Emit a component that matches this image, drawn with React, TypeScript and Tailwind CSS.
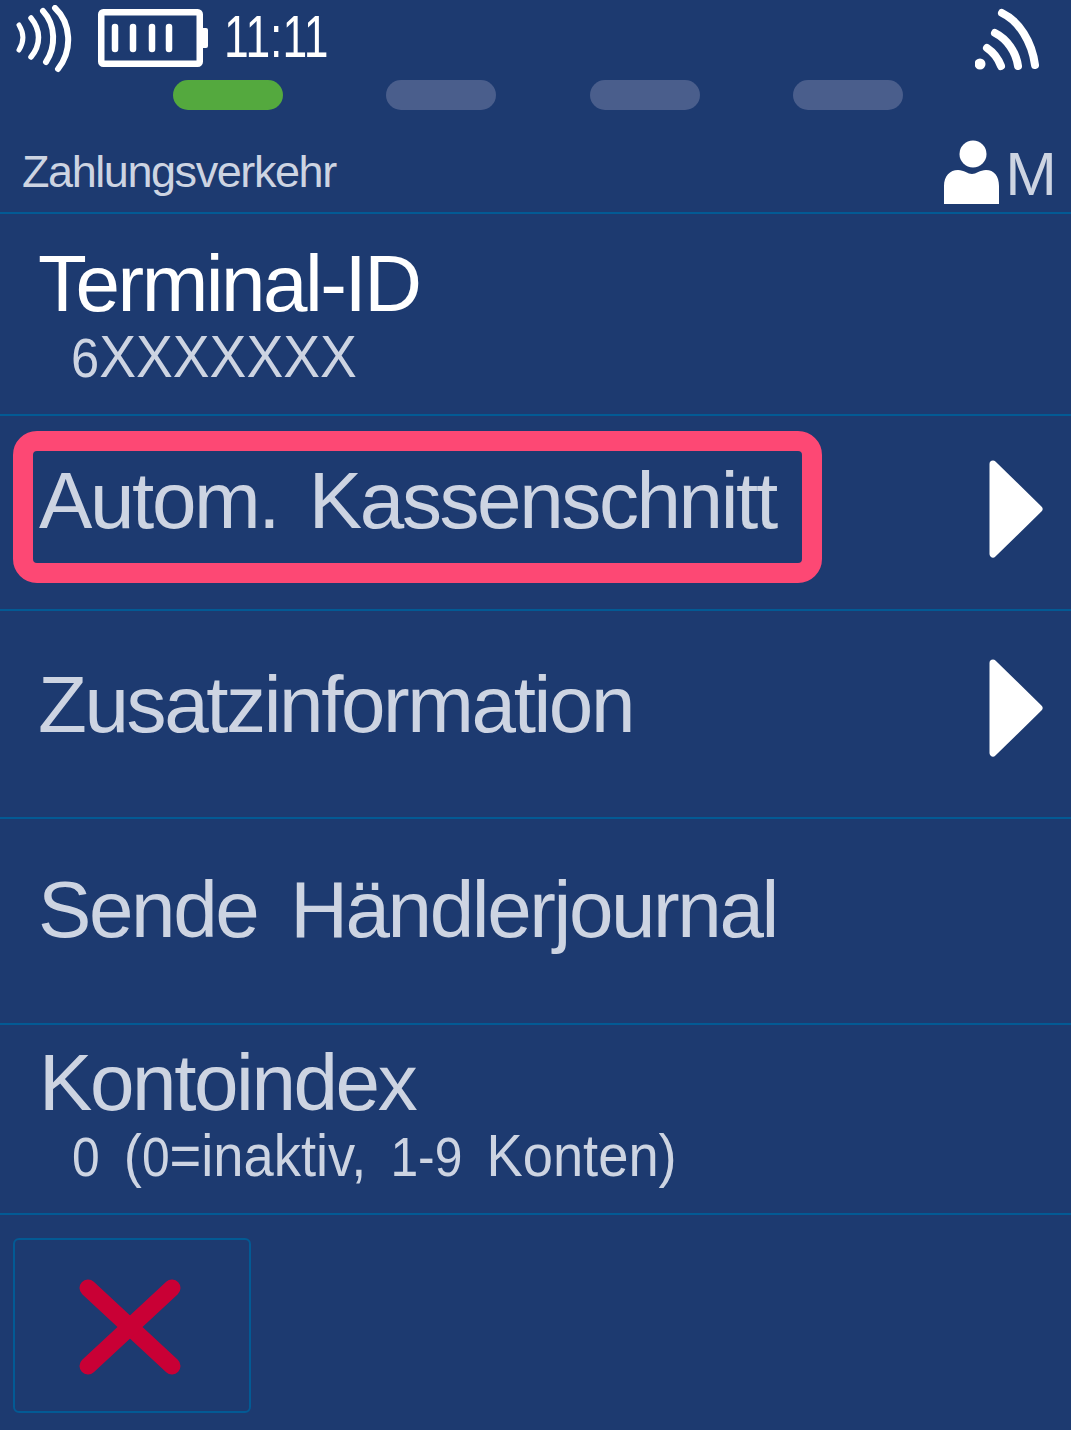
const font = { fontFamily: '"Liberation Sans", Arial, sans-serif' };

const Arrow = () => (
  <svg width="54" height="98" viewBox="0 0 54 98" className="shrink-0">
    <path d="M4 4 L50 49 L4 94 Z" fill="#fff" stroke="#fff" strokeWidth="7" strokeLinejoin="round" />
  </svg>
);

const Contactless = () => (
  <svg width="56" height="68" viewBox="0 0 56 68" fill="none" stroke="#fff" strokeLinecap="round">
    <path d="M3 20 C8 28 8 37 3 45" strokeWidth="5" />
    <path d="M15 13 C25 25 25 40 15 52" strokeWidth="5.5" />
    <path d="M27 6 C40 20 40 42 30 57" strokeWidth="6" />
    <path d="M39 3 C55 18 57 45 42 64" strokeWidth="6" />
  </svg>
);

const Battery = () => (
  <svg width="112" height="62" viewBox="0 0 112 62" fill="none">
    <rect x="3.25" y="4.25" width="98.5" height="51.5" rx="2" stroke="#fff" strokeWidth="6.5" />
    <path d="M105 20 h3 a2 2 0 0 1 2 2 v16 a2 2 0 0 1 -2 2 h-3 z" fill="#fff" />
    <g stroke="#fff" strokeWidth="6.5" strokeLinecap="round">
      <path d="M17 19 V41" />
      <path d="M35 19 V41" />
      <path d="M54 19 V41" />
      <path d="M71 19 V41" />
    </g>
  </svg>
);

const Wifi = () => (
  <svg width="66" height="66" viewBox="0 0 66 66" fill="none" stroke="#fff" strokeWidth="8" strokeLinecap="round">
    <circle cx="5" cy="56" r="5.5" fill="#fff" stroke="none" />
    <path d="M12 40 C18 44 23 50 26 58" />
    <path d="M20 25 C32 31 41 44 43 58" />
    <path d="M27 5 C44 13 57 34 60 57" />
  </svg>
);

const User = () => (
  <svg width="56" height="64" viewBox="0 0 56 64" fill="#fff">
    <circle cx="29" cy="14" r="13.5" />
    <path d="M0 64 V46 C0 36 6 30 14 30 C20 30 24 34 28 34 C32 34 36 30 42 30 C50 30 55 36 55 46 V64 Z" />
  </svg>
);

const Pill = ({ active, className }: { active?: boolean; className?: string }) => (
  <div className={`h-[30px] w-[110px] rounded-full ${active ? "bg-[#54a93e]" : "bg-[#4a5e8c]"} ${className ?? ""}`} />
);

const Row = ({ height, children }: { height: string; children: React.ReactNode }) => (
  <div className={`${height} relative flex items-center justify-between border-b-2 border-[#035a94]`}>{children}</div>
);

const Digit = ({ children }: { children: React.ReactNode }) => <span className="text-[55px]">{children}</span>;

export default function App() {
  return (
    <div className="h-[1430px] w-[1071px] overflow-hidden bg-[#1d3a70] text-[#cdd4e2]" style={font}>
      <div className="flex h-[80px] items-start pl-[16px] pr-[30px] pt-[5px]">
        <Contactless />
        <div className="ml-[26px] mt-[3px]"><Battery /></div>
        <div className="ml-[14px] mt-[2px] w-[110px] origin-left scale-x-[0.74] whitespace-nowrap text-[60px] leading-[60px] text-white">11:11</div>
        <div className="ml-auto mt-[3px]"><Wifi /></div>
      </div>
      <div className="flex h-[30px] pl-[173px]">
        <Pill active />
        <Pill className="ml-[103px]" />
        <Pill className="ml-[94px]" />
        <Pill className="ml-[93px]" />
      </div>
      <div className="flex h-[104px] items-start justify-between border-b-2 border-[#035a94] pl-[22px] pr-[14px]">
        <div className="mt-[36px] text-[45px] leading-[52px] tracking-[-1.43px]">Zahlungsverkehr</div>
        <div className="mt-[30px] flex items-start">
          <User />
          <span className="ml-[5px] mt-[4px] text-[62px] leading-[60px]">M</span>
        </div>
      </div>
      <div className="h-[202px] border-b-2 border-[#035a94] pl-[38px]">
        <div className="pt-[25px] text-[80px] leading-[90px] tracking-[-2.5px] text-white">Terminal-ID</div>
        <div className="ml-[33px] origin-left scale-x-[0.92] text-[60px] leading-[55px]"><Digit>6</Digit>XXXXXXX</div>
      </div>
      <Row height="h-[195px]">
        <div className="ml-[39px] mb-[24px] text-[80px] leading-[90px] tracking-[-2.4px] [word-spacing:11px]">Autom. Kassenschnitt</div>
        <div className="mb-[8px] mr-[28px]"><Arrow /></div>
        <div className="absolute left-[13px] top-[15px] h-[152px] w-[809px] rounded-[24px] border-[20px] border-[#fd4874]" />
      </Row>
      <Row height="h-[208px]">
        <div className="ml-[38px] mb-[18px] text-[80px] leading-[90px] tracking-[-2.4px]">Zusatzinformation</div>
        <div className="mb-[12px] mr-[28px]"><Arrow /></div>
      </Row>
      <Row height="h-[206px]">
        <div className="ml-[38px] mb-[22px] text-[80px] leading-[90px] tracking-[-2.4px] [word-spacing:13px]">Sende Händlerjournal</div>
      </Row>
      <div className="h-[190px] border-b-2 border-[#035a94] pl-[39px]">
        <div className="pt-[13px] text-[80px] leading-[90px] tracking-[-2.4px]">Kontoindex</div>
        <div className="ml-[33px] origin-left scale-x-[0.905] whitespace-nowrap text-[60px] leading-[56px] [word-spacing:10px]">
          <Digit>0</Digit> (<Digit>0</Digit>=inaktiv, <Digit>1-9</Digit> Konten)
        </div>
      </div>
      <div className="pl-[13px] pt-[23px]">
        <div className="flex h-[175px] w-[238px] items-center justify-center rounded-[6px] border-2 border-[#035a94] pr-[5px] pt-[2px]">
          <svg width="102" height="96" viewBox="0 0 102 96" stroke="#c90035" strokeWidth="17" strokeLinecap="round">
            <path d="M9 9 L93 87" />
            <path d="M93 9 L9 87" />
          </svg>
        </div>
      </div>
    </div>
  );
}
